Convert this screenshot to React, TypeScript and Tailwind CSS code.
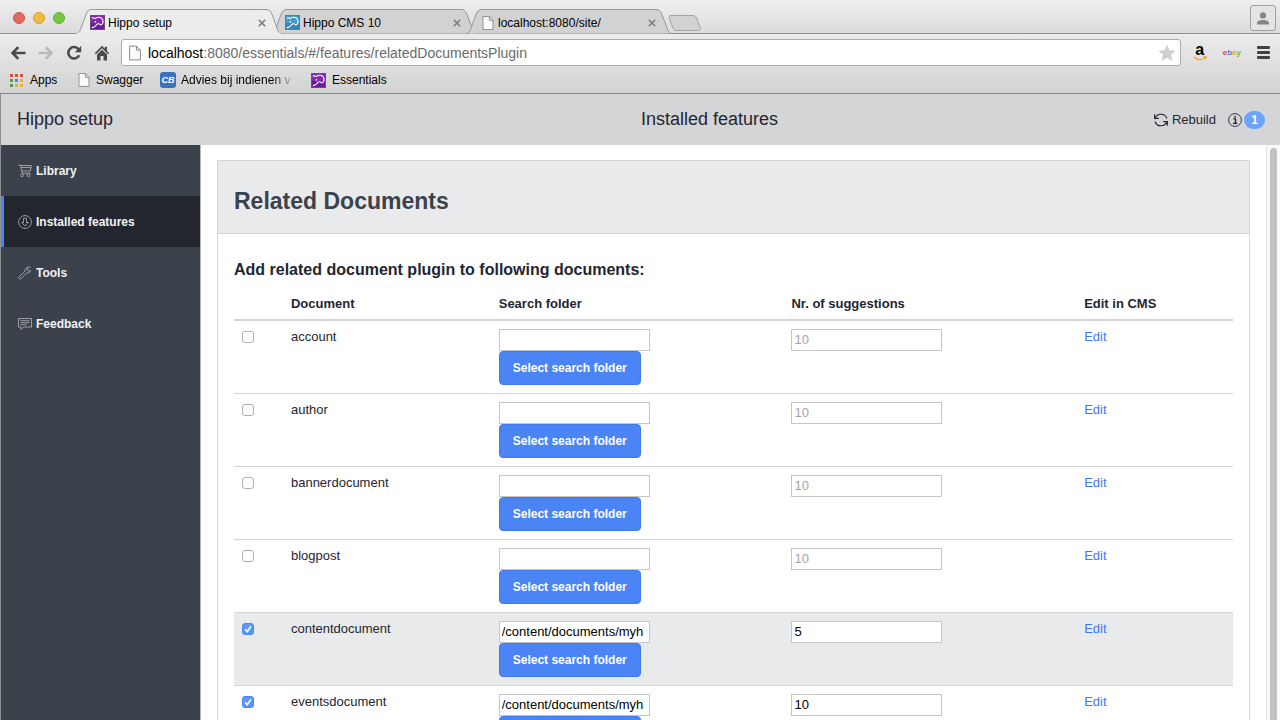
import React from "react";

type Row = { name: string; checked: boolean; folder: string; count: string };

const rows: Row[] = [
  { name: "account", checked: false, folder: "", count: "" },
  { name: "author", checked: false, folder: "", count: "" },
  { name: "bannerdocument", checked: false, folder: "", count: "" },
  { name: "blogpost", checked: false, folder: "", count: "" },
  { name: "contentdocument", checked: true, folder: "/content/documents/myhippoproject", count: "5" },
  { name: "eventsdocument", checked: true, folder: "/content/documents/myhippoproject", count: "10" },
];

function HippoIcon({ blue = false }: { blue?: boolean }) {
  return (
    <svg viewBox="0 0 15 15" className="size-[15px] shrink-0" aria-hidden="true">
      <rect x=".5" y=".5" width="14" height="14" fill={blue ? "#459cc9" : "#8428b4"} stroke={blue ? "#5d7c8c" : "#64507a"} />
      <path d="M1 8h13v6H1z" fill={blue ? "#3786b4" : "#6c1a9c"} />
      <path
        d="M1.800 3.200C3.200 2 4.200 3.800 5.600 3.400 7.500 1.800 11 1.800 12.300 4c1 2 .8 4.300-.6 5.600-1.200.9-1.700-.6-2.900-.8C7.200 8.600 6.300 9.400 5.800 10.700 5 12 3.200 12.200 1.800 12.700M4.800 7.600l1-1.600"
        fill="none"
        stroke="#fff"
        strokeWidth="1.100"
      />
    </svg>
  );
}

function PageIcon({ className }: { className: string }) {
  return (
    <svg viewBox="0 0 12 15" className={className} aria-hidden="true">
      <path d="M.6.600h6.900l3.900 4v9.800H.6z" fill="#fafafa" stroke="#8a8a8a" />
      <path d="M7.500.600v4h3.900" fill="none" stroke="#8a8a8a" />
    </svg>
  );
}

function Tab({ title, icon, active = false }: { title: string; icon: React.ReactNode; active?: boolean }) {
  return (
    <div className={`relative flex h-[25px] w-[206px] shrink-0 items-center px-[14px] pt-[2px] ${active ? "z-10" : "-ml-[11px]"}`}>
      <svg viewBox="0 0 206 25" preserveAspectRatio="none" className="absolute inset-0 h-full w-full" aria-hidden="true">
        <path
          d="M0 24.500c3 0 3.500-1.500 4.500-4l5.500-15C11.500 2 12.500.5 16 .5h174c3.500 0 4.500 1.500 6 5l5.500 15c1 2.500 1.500 4 4.500 4"
          fill={active ? "#ececec" : "#d2d2d2"}
          stroke="#979797"
        />
        {active && <path d="M1 24.500h204" stroke="#ececec" strokeWidth="1.500" />}
      </svg>
      <div className="relative flex w-full items-center gap-[3px]">
        {icon}
        <span className="grow text-xs leading-4">{title}</span>
        <button type="button" aria-label={`Close ${title}`} className="flex size-3 items-center justify-center">
          <svg viewBox="0 0 8 8" className="size-[8px]" aria-hidden="true">
            <path d="M.8.8l6.400 6.400M7.200.8L.8 7.200" stroke="#7d7d7d" strokeWidth="1.600" />
          </svg>
        </button>
      </div>
    </div>
  );
}

function BrowserChrome() {
  return (
    <div className="shrink-0">
      <div className="flex h-[34px] items-end border-b border-[#8f8f8f] bg-linear-to-b from-[#efefef] to-[#dcdcdc]">
        <div className="flex w-[76px] shrink-0 gap-2 self-center pt-[2px] pl-[13px]">
          <span className="size-3 rounded-full border border-[#c9564a] bg-[#e06c5f]" />
          <span className="size-3 rounded-full border border-[#d3a02e] bg-[#f1bd3f]" />
          <span className="size-3 rounded-full border border-[#5fae33] bg-[#75c843]" />
        </div>
        <div className="-mb-px flex">
          <Tab active title="Hippo setup" icon={<HippoIcon />} />
          <Tab title="Hippo CMS 10" icon={<HippoIcon blue />} />
          <Tab title="localhost:8080/site/" icon={<PageIcon className="mr-px ml-[2px] h-[14px] w-3 shrink-0" />} />
        </div>
        <button type="button" aria-label="New tab" className="mb-[2px] -ml-1">
          <svg viewBox="0 0 33 16" className="h-4 w-[33px]" aria-hidden="true">
            <path d="M3 .5h22c2 0 3 1 3.600 2.500l3.500 9.500c.7 2-.1 3-1.600 3H8.500c-2 0-3-1-3.600-2.500L1.300 3.500C.700 1.700 1.400.5 3 .5z" fill="#d2d2d2" stroke="#a3a3a3" />
          </svg>
        </button>
        <button type="button" aria-label="Profile" className="mr-1 mb-[2px] ml-auto flex h-[26px] w-[26px] items-center justify-center rounded-[3px] border border-[#a0a0a0] bg-[#e4e4e4]">
          <svg viewBox="0 0 12 13" className="h-[13px] w-3" fill="#868686" aria-hidden="true">
            <circle cx="6" cy="3.400" r="3.100" />
            <path d="M0 12.500V11c0-2 3-3 6-3s6 1 6 3v1.500z" />
          </svg>
        </button>
      </div>
      <div className="bg-linear-to-b from-[#ececec] to-[#d2d2d2]">
        <div className="flex h-9 items-center pt-px pr-[10px] pl-[10px]">
          <div className="flex shrink-0 items-center gap-3">
            <button type="button" aria-label="Back">
              <svg viewBox="0 0 16 16" className="size-4" fill="none" stroke="#4a4a4a" strokeWidth="2.600" aria-hidden="true">
                <path d="M2.500 8H15.500M8.300 2.200L2.500 8l5.800 5.800" />
              </svg>
            </button>
            <button type="button" aria-label="Forward">
              <svg viewBox="0 0 16 16" className="size-4" fill="none" stroke="#b9b9b9" strokeWidth="2.600" aria-hidden="true">
                <path d="M.5 8h13M7.700 2.200L13.500 8l-5.800 5.800" />
              </svg>
            </button>
            <button type="button" aria-label="Reload">
              <svg viewBox="0 0 16 16" className="size-4" aria-hidden="true">
                <path d="M13.200 10.200A5.700 5.700 0 1 1 12.600 4.400" fill="none" stroke="#4a4a4a" strokeWidth="2.500" />
                <path d="M15.200.8v6.400H8.800z" fill="#4a4a4a" />
              </svg>
            </button>
            <button type="button" aria-label="Home">
              <svg viewBox="0 0 16 16" className="size-4" fill="#4a4a4a" aria-hidden="true">
                <path d="M8 .8L.8 8.200l1.100 1.100L8 3.300l6.100 6 1.100-1.100-2.200-2.300V1.800h-2.200v2z" />
                <path d="M3 9.500L8 4.700l5 4.800v6H9.500v-4.500h-3v4.500H3z" />
              </svg>
            </button>
          </div>
          <div className="ml-[11px] flex h-[27px] grow items-center rounded-[3px] border border-[#acacac] bg-white pr-1 pl-[7px]">
            <PageIcon className="h-4 w-3 shrink-0" />
            <div className="relative ml-[7px] h-5 grow">
              <span aria-hidden="true" className="absolute inset-0 text-sm leading-5 text-[#6b6b6b]">
                <span className="text-black">localhost</span>:8080/essentials/#/features/relatedDocumentsPlugin
              </span>
              <input
                aria-label="Address"
                defaultValue="localhost:8080/essentials/#/features/relatedDocumentsPlugin"
                className="relative block h-5 w-full bg-transparent text-sm leading-5 text-transparent outline-none"
              />
            </div>
            <button type="button" aria-label="Bookmark this page">
              <svg viewBox="0 0 18 18" className="size-[18px]" fill="#cfcfcf" aria-hidden="true">
                <path d="M9 .5l2.500 5.700 6.100.6-4.600 4.100 1.400 6.100L9 13.800 3.600 17 5 10.900.4 6.800l6.100-.6z" />
              </svg>
            </button>
          </div>
          <div className="ml-3 flex shrink-0 items-center">
            <button type="button" aria-label="Amazon" className="flex w-[14px] flex-col items-center text-base leading-3 font-bold">
              a
              <svg viewBox="0 0 14 5" className="h-[5px] w-[14px]" fill="none" stroke="#f0a22e" strokeWidth="1.200" aria-hidden="true">
                <path d="M.8 1c3.500 3 8 3.200 11.400.6M10.500.8h2.700l-.8 2.400" />
              </svg>
            </button>
            <button type="button" aria-label="eBay" className="ml-4 flex text-[8px] leading-4 font-bold">
              <span className="text-[#d8404a]">e</span>
              <span className="text-[#4b80e0]">b</span>
              <span className="text-[#e5b020]">a</span>
              <span className="text-[#83b52c]">y</span>
            </button>
            <button type="button" aria-label="Menu" className="ml-4 flex w-[13px] flex-col gap-[2px]">
              <span className="h-[3px] rounded-[1px] bg-[#434343]" />
              <span className="h-[3px] rounded-[1px] bg-[#434343]" />
              <span className="h-[3px] rounded-[1px] bg-[#434343]" />
            </button>
          </div>
        </div>
        <nav aria-label="Bookmarks" className="flex h-6 items-center border-b border-[#858585] pb-[3px] pl-[10px] text-xs leading-4">
          <a href="#apps" className="flex w-[68px] items-center gap-[7px]">
            <svg viewBox="0 0 13 13" className="size-[13px]" aria-hidden="true">
              <path d="M0 0h3v3H0zM5 0h3v3H5zM10 0h3v3h-3z" fill="#d9503f" />
              <path d="M0 5h3v3H0z" fill="#5a9a4e" />
              <path d="M5 5h3v3H5z" fill="#4a86e8" />
              <path d="M10 5h3v3h-3zM10 10h3v3h-3z" fill="#e8b02e" />
              <path d="M0 10h3v3H0z" fill="#5a9a4e" />
              <path d="M5 10h3v3H5z" fill="#e8b02e" />
            </svg>
            Apps
          </a>
          <a href="#swagger" className="flex w-[82px] items-center gap-[6px]">
            <PageIcon className="h-[14px] w-3" />
            Swagger
          </a>
          <a href="#advies" className="flex w-[151px] items-center gap-[5px]">
            <span className="flex size-4 items-center justify-center rounded-[3px] bg-[#3b72bd] text-[9px] leading-4 font-bold text-white italic">CB</span>
            <span className="w-[114px] mask-r-from-80% whitespace-nowrap">Advies bij indienen v</span>
          </a>
          <a href="#essentials" className="flex items-center gap-[6px]">
            <HippoIcon />
            Essentials
          </a>
        </nav>
      </div>
    </div>
  );
}

function NavItem({ label, active = false, children }: { label: string; active?: boolean; children: React.ReactNode }) {
  return (
    <a
      href={`#${label}`}
      aria-current={active ? "page" : undefined}
      className={`flex h-[51px] items-center gap-1 border-l-[3px] pl-[14px] text-xs leading-4 font-bold text-[#f1f2f3] ${
        active ? "border-[#4b84f5] bg-[#24262f]" : "border-transparent"
      }`}
    >
      <svg viewBox="0 0 14 14" className="size-[14px]" fill="none" stroke="#a5a9ae" strokeWidth=".9" aria-hidden="true">
        {children}
      </svg>
      {label}
    </a>
  );
}

function Sidebar() {
  return (
    <nav aria-label="Main" className="w-[200px] shrink-0 border-r border-[#b5b7ba] bg-[#3b424b]">
      <NavItem label="Library">
        <path d="M.3 1h2l2 8.200h8M2.400 1.500h11.100l-1.400 5.500H3.800M2.900 3.500h10" />
        <circle cx="4" cy="11.300" r="1.400" />
        <circle cx="10.500" cy="11.300" r="1.400" />
      </NavItem>
      <NavItem label="Installed features" active>
        <circle cx="7" cy="7" r="6.400" />
        <path d="M5.500 3.300h3v4.200h1.800L7 11 3.700 7.500h1.800z" />
      </NavItem>
      <NavItem label="Tools">
        <path d="M12.300 4.300l-1.800 1-1.400-1.500.9-1.800C7.900 1.500 6.400 3.200 7 5.200L1.200 10.800c-1.200 1.200.7 3 1.900 1.900l5.600-5.800c2.200.6 3.900-.8 3.600-2.600zM8.500 1.900l2-1 2.100.3" />
      </NavItem>
      <NavItem label="Feedback">
        <path d="M.5 1.500h13v8.500H5.500l-2.500 2.500V10H.5zM2.500 3.700h9M2.500 5.700h9M2.500 7.700h6" />
      </NavItem>
    </nav>
  );
}

function DocumentRow({ row }: { row: Row }) {
  const inputClass =
    "block h-[22px] w-[151px] border border-[#c6c6c6] bg-white pr-[5px] pb-[2px] pl-[2px] text-[13px] leading-4 text-black placeholder:text-[#a5a5a5]";
  return (
    <tr className={`border-t border-[#d4d5d7] align-top first:border-t-0 ${row.name === "contentdocument" ? "bg-[#e9eaec]" : ""}`}>
      <td className="p-2">
        <span className="mt-[2px] grid size-3">
          <input
            id={`use-${row.name}`}
            type="checkbox"
            defaultChecked={row.checked}
            className="peer col-start-1 row-start-1 size-3 appearance-none rounded-[3px] border border-[#b0b0b0] bg-white checked:border-[#4b86ee] checked:bg-[#5c96f7]"
          />
          <svg viewBox="0 0 12 12" className="pointer-events-none invisible relative col-start-1 row-start-1 size-3 peer-checked:visible" aria-hidden="true">
            <path d="M3 6.300l2.200 2.400L9 3.200" fill="none" stroke="#fff" strokeWidth="1.600" />
          </svg>
        </span>
      </td>
      <td className="p-2">
        <label htmlFor={`use-${row.name}`} className="block">{row.name}</label>
      </td>
      <td className="p-2">
        <input type="text" aria-label={`Search folder for ${row.name}`} defaultValue={row.folder} className={inputClass} />
        <button type="button" className="block h-[34px] rounded-[4px] border border-[#3f79ea] bg-[#4b84f5] px-[13px] text-xs leading-4 font-bold text-white">
          Select search folder
        </button>
      </td>
      <td className="p-2">
        <input type="text" aria-label={`Number of suggestions for ${row.name}`} placeholder="10" defaultValue={row.count} className={inputClass} />
      </td>
      <td className="p-2">
        <a href={`#edit-${row.name}`} className="text-[#3f78f2]">Edit</a>
      </td>
    </tr>
  );
}

export default function App() {
  return (
    <div className="flex h-screen flex-col overflow-hidden bg-white font-['Helvetica_Neue','Liberation_Sans',sans-serif] text-black">
      <BrowserChrome />
      <div className="flex min-h-0 grow flex-col border-l border-[#8f9194] text-[13px] leading-4 text-[#24262f]">
        <header className="grid h-[51px] shrink-0 grid-cols-2 items-center bg-[#d4d5d7] pr-[15px]">
          <div className="pb-[2px] pl-4 text-lg leading-6">Hippo setup</div>
          <div className="flex items-center pl-2">
            <h1 className="grow pb-[2px] text-lg leading-6">Installed features</h1>
            <button type="button" className="flex items-center gap-1">
              <svg viewBox="0 0 14 14" className="size-[14px]" fill="none" stroke="#24262f" strokeWidth="1.100" aria-hidden="true">
                <path d="M.6 1.200v4.200h4.200M1 5.200C2 2.600 4.300 1.200 7 1.200c2.900 0 5.100 1.700 5.900 4.300M13.400 12.800V8.600H9.200M13 8.800C12 11.400 9.700 12.800 7 12.800c-2.900 0-5.100-1.700-5.900-4.300" />
              </svg>
              Rebuild
            </button>
            <button type="button" aria-label="Messages: 1" className="ml-3 flex items-center gap-[2px]">
              <svg viewBox="0 0 14 14" className="size-[14px]" fill="none" stroke="#24262f" aria-hidden="true">
                <circle cx="7" cy="7" r="6.400" strokeWidth=".9" />
                <path d="M5.300 5.900h2.200v4.200M5 10.400h4.200M6.400 3.700h1.600" strokeWidth="1.400" />
              </svg>
              <span className="flex h-[18px] w-[21px] items-center justify-center rounded-full bg-[#6ba3fd] text-xs leading-4 font-bold text-white">1</span>
            </button>
          </div>
        </header>
        <div className="flex min-h-0 grow">
          <Sidebar />
          <main className="min-w-0 grow overflow-y-auto px-4 pt-[15px] [scrollbar-width:none]">
            <section className="border border-[#d4d5d7]">
              <div className="border-b border-[#d4d5d7] bg-[#e9eaec] px-4 pt-6 pb-4">
                <h2 className="text-[23px] leading-8 font-bold text-[#3b424b]">Related Documents</h2>
              </div>
              <div className="px-4 pt-[26px] pb-4">
                <h3 className="mb-2 text-base leading-5 font-bold">Add related document plugin to following documents:</h3>
                <table className="w-full table-fixed border-collapse text-left">
                  <colgroup>
                    <col className="w-[4.9%]" />
                    <col className="w-[20.8%]" />
                    <col className="w-[29.3%]" />
                    <col className="w-[29.3%]" />
                    <col />
                  </colgroup>
                  <thead className="border-b-2 border-[#d4d5d7]">
                    <tr>
                      <td />
                      <th className="px-2 pt-2 pb-[7px]">Document</th>
                      <th className="px-2 pt-2 pb-[7px]">Search folder</th>
                      <th className="px-2 pt-2 pb-[7px]">Nr. of suggestions</th>
                      <th className="px-2 pt-2 pb-[7px]">Edit in CMS</th>
                    </tr>
                  </thead>
                  <tbody>
                    {rows.map((row) => (
                      <DocumentRow key={row.name} row={row} />
                    ))}
                  </tbody>
                </table>
              </div>
            </section>
          </main>
          <div className="w-[14px] shrink-0 border-l border-[#e4e4e4] bg-[#fafafa] px-[3px] pt-[3px]" aria-hidden="true">
            <div className="h-full rounded-t-full bg-[#c1c1c1]" />
          </div>
        </div>
      </div>
    </div>
  );
}
